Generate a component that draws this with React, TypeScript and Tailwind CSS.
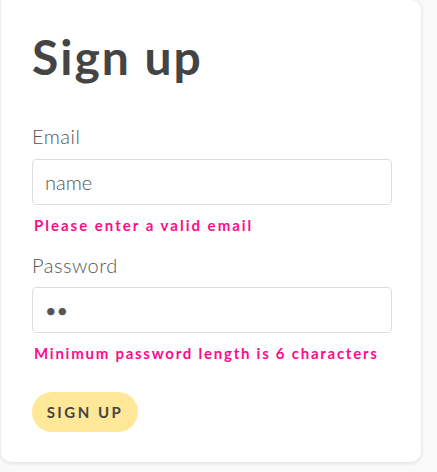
import React from "react";

export default function App() {
    return (
        <div className="min-h-screen bg-[#f9f9f9] font-['Lato',sans-serif]">
            <div className="ml-[1px] w-[420px] rounded-b-[10px] rounded-tr-[10px] bg-white px-[31px] pt-[28px] pb-[30px] shadow-[0_1px_4px_rgba(0,0,0,0.12)]">
                <h1 className="text-[48px] leading-[58px] font-bold tracking-[2px] text-[#444]">Sign up</h1>

                <form className="mt-[38px] flex flex-col">
                    <label className="text-[20px] leading-[24px] font-light text-[#555] tracking-[0.5px]">Email</label>
                    <input
                        type="text"
                        defaultValue="name"
                        className="mt-[11px] h-[46px] w-[360px] rounded-[4px] border border-[#ddd] px-[12px] text-[20px] font-light text-[#555] outline-none"
                    />
                    <p className="mt-[10px] text-[15px] leading-[20px] font-bold tracking-[2px] text-[#ff0a8c] pl-[2px]">Please enter a valid email</p>

                    <label className="mt-[18px] text-[20px] leading-[24px] font-light text-[#555] tracking-[0.5px]">Password</label>
                    <input
                        type="password"
                        defaultValue="ab"
                        className="mt-[10px] h-[46px] w-[360px] rounded-[4px] border border-[#ddd] px-[12px] text-[20px] text-[#555] outline-none"
                    />
                    <p className="mt-[10px] text-[15px] leading-[20px] font-bold tracking-[1.75px] text-[#ff0a8c] pl-[2px]">Minimum password length is 6 characters</p>

                    <button
                        type="button"
                        className="mt-[29px] h-[40px] w-[106px] rounded-full bg-[#ffe897] text-[15px] font-bold tracking-[2.5px] text-[#444]"
                    >
                        SIGN UP
                    </button>
                </form>
            </div>
        </div>
    );
}
